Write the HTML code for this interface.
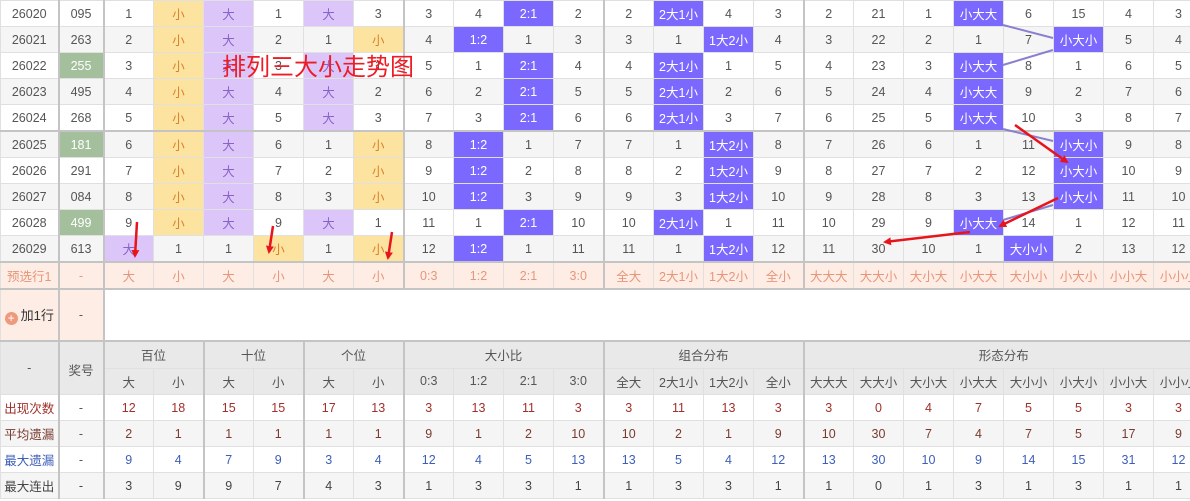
<!DOCTYPE html>
<html><head><meta charset="utf-8">
<style>
html,body{margin:0;padding:0;background:#fff;width:1190px;height:501px;overflow:hidden;}
body{position:relative;font-family:"Liberation Sans","Noto Sans CJK SC",sans-serif;font-size:12.5px;color:#555;}
table{border-collapse:collapse;table-layout:fixed;width:1203px;}
td{border:1px solid #e0e0e0;text-align:center;height:25px;padding:0;white-space:nowrap;overflow:hidden;}
tr.o td{background:#f5f5f5;}
.L{border-left:2px solid #c4c4c4;}
tr.t td{border-top:2px solid #c4c4c4;}
td.y{background:#fde3a0 !important;color:#d9822b;}
td.p{background:#dcc6f9 !important;color:#8a63c9;}
td.b{background:#7b68ff !important;color:#fff;}
td.g{background:#a3bf9c !important;color:#fff;}
tr.s td{background:#fdede5;color:#e8957a;border-top:2px solid #c4c4c4;}
tr.h td{background:#e9e9e9;color:#555;}
.r1 td{color:#a0302a;} .r2 td{color:#7a3b2e;} .r3 td{color:#3d5fb8;} .r4 td{color:#444;}
.r1 td.n{color:#a0302a;}
</style></head><body>
<table>
<colgroup><col style="width:58px"><col style="width:45px"><col span="22" style="width:50px"></colgroup>
<tr><td>26020</td><td class="L">095</td><td class="L">1</td><td class="y">小</td><td class="p">大</td><td>1</td><td class="p">大</td><td>3</td><td class="L">3</td><td>4</td><td class="b">2:1</td><td>2</td><td class="L">2</td><td class="b">2大1小</td><td>4</td><td>3</td><td class="L">2</td><td>21</td><td>1</td><td class="b">小大大</td><td>6</td><td>15</td><td>4</td><td>3</td></tr>
<tr class="o"><td>26021</td><td class="L">263</td><td class="L">2</td><td class="y">小</td><td class="p">大</td><td>2</td><td>1</td><td class="y">小</td><td class="L">4</td><td class="b">1:2</td><td>1</td><td>3</td><td class="L">3</td><td>1</td><td class="b">1大2小</td><td>4</td><td class="L">3</td><td>22</td><td>2</td><td>1</td><td>7</td><td class="b">小大小</td><td>5</td><td>4</td></tr>
<tr><td>26022</td><td class="L g">255</td><td class="L">3</td><td class="y">小</td><td class="p">大</td><td>3</td><td class="p">大</td><td>1</td><td class="L">5</td><td>1</td><td class="b">2:1</td><td>4</td><td class="L">4</td><td class="b">2大1小</td><td>1</td><td>5</td><td class="L">4</td><td>23</td><td>3</td><td class="b">小大大</td><td>8</td><td>1</td><td>6</td><td>5</td></tr>
<tr class="o"><td>26023</td><td class="L">495</td><td class="L">4</td><td class="y">小</td><td class="p">大</td><td>4</td><td class="p">大</td><td>2</td><td class="L">6</td><td>2</td><td class="b">2:1</td><td>5</td><td class="L">5</td><td class="b">2大1小</td><td>2</td><td>6</td><td class="L">5</td><td>24</td><td>4</td><td class="b">小大大</td><td>9</td><td>2</td><td>7</td><td>6</td></tr>
<tr><td>26024</td><td class="L">268</td><td class="L">5</td><td class="y">小</td><td class="p">大</td><td>5</td><td class="p">大</td><td>3</td><td class="L">7</td><td>3</td><td class="b">2:1</td><td>6</td><td class="L">6</td><td class="b">2大1小</td><td>3</td><td>7</td><td class="L">6</td><td>25</td><td>5</td><td class="b">小大大</td><td>10</td><td>3</td><td>8</td><td>7</td></tr>
<tr class="o t"><td>26025</td><td class="L g">181</td><td class="L">6</td><td class="y">小</td><td class="p">大</td><td>6</td><td>1</td><td class="y">小</td><td class="L">8</td><td class="b">1:2</td><td>1</td><td>7</td><td class="L">7</td><td>1</td><td class="b">1大2小</td><td>8</td><td class="L">7</td><td>26</td><td>6</td><td>1</td><td>11</td><td class="b">小大小</td><td>9</td><td>8</td></tr>
<tr><td>26026</td><td class="L">291</td><td class="L">7</td><td class="y">小</td><td class="p">大</td><td>7</td><td>2</td><td class="y">小</td><td class="L">9</td><td class="b">1:2</td><td>2</td><td>8</td><td class="L">8</td><td>2</td><td class="b">1大2小</td><td>9</td><td class="L">8</td><td>27</td><td>7</td><td>2</td><td>12</td><td class="b">小大小</td><td>10</td><td>9</td></tr>
<tr class="o"><td>26027</td><td class="L">084</td><td class="L">8</td><td class="y">小</td><td class="p">大</td><td>8</td><td>3</td><td class="y">小</td><td class="L">10</td><td class="b">1:2</td><td>3</td><td>9</td><td class="L">9</td><td>3</td><td class="b">1大2小</td><td>10</td><td class="L">9</td><td>28</td><td>8</td><td>3</td><td>13</td><td class="b">小大小</td><td>11</td><td>10</td></tr>
<tr><td>26028</td><td class="L g">499</td><td class="L">9</td><td class="y">小</td><td class="p">大</td><td>9</td><td class="p">大</td><td>1</td><td class="L">11</td><td>1</td><td class="b">2:1</td><td>10</td><td class="L">10</td><td class="b">2大1小</td><td>1</td><td>11</td><td class="L">10</td><td>29</td><td>9</td><td class="b">小大大</td><td>14</td><td>1</td><td>12</td><td>11</td></tr>
<tr class="o"><td>26029</td><td class="L">613</td><td class="L p">大</td><td>1</td><td>1</td><td class="y">小</td><td>1</td><td class="y">小</td><td class="L">12</td><td class="b">1:2</td><td>1</td><td>11</td><td class="L">11</td><td>1</td><td class="b">1大2小</td><td>12</td><td class="L">11</td><td>30</td><td>10</td><td>1</td><td class="b">大小小</td><td>2</td><td>13</td><td>12</td></tr>
<tr class="s"><td>预选行1</td><td class="L">-</td><td class="L">大</td><td>小</td><td>大</td><td>小</td><td>大</td><td>小</td><td class="L">0:3</td><td>1:2</td><td>2:1</td><td>3:0</td><td class="L">全大</td><td>2大1小</td><td>1大2小</td><td>全小</td><td class="L">大大大</td><td>大大小</td><td>大小大</td><td>小大大</td><td>大小小</td><td>小大小</td><td>小小大</td><td>小小小</td></tr>
<tr style="height:51px"><td style="background:#fdede5;color:#333;border-top:2px solid #c4c4c4;height:50px;font-size:13px"><span style="display:inline-block;width:13px;height:13px;border-radius:50%;background:#ee9a7c;color:#fff;font-size:12px;line-height:13px;vertical-align:-2px;margin-right:3px">+</span>加1行</td><td class="L" style="background:#fdede5;border-top:2px solid #c4c4c4">-</td><td class="L" colspan="22" style="background:#fff;border-top:2px solid #c4c4c4"></td></tr>
<tr class="h t"><td rowspan="2">-</td><td rowspan="2" class="L" style="vertical-align:top;padding-top:18px;height:34px">奖号</td><td class="L" colspan="2">百位</td><td colspan="2" class="L">十位</td><td colspan="2" class="L">个位</td><td colspan="4" class="L">大小比</td><td colspan="4" class="L">组合分布</td><td colspan="8" class="L">形态分布</td></tr>
<tr class="h"><td class="L">大</td><td>小</td><td class="L">大</td><td>小</td><td class="L">大</td><td>小</td><td class="L">0:3</td><td>1:2</td><td>2:1</td><td>3:0</td><td class="L">全大</td><td>2大1小</td><td>1大2小</td><td>全小</td><td class="L">大大大</td><td>大大小</td><td>大小大</td><td>小大大</td><td>大小小</td><td>小大小</td><td>小小大</td><td>小小小</td></tr>
<tr class="r1"><td>出现次数</td><td class="L" style="color:#555">-</td><td class="L">12</td><td>18</td><td class="L">15</td><td>15</td><td class="L">17</td><td>13</td><td class="L">3</td><td>13</td><td>11</td><td>3</td><td class="L">3</td><td>11</td><td>13</td><td>3</td><td class="L">3</td><td>0</td><td>4</td><td>7</td><td>5</td><td>5</td><td>3</td><td>3</td></tr>
<tr class="r2 o"><td>平均遗漏</td><td class="L" style="color:#555">-</td><td class="L">2</td><td>1</td><td class="L">1</td><td>1</td><td class="L">1</td><td>1</td><td class="L">9</td><td>1</td><td>2</td><td>10</td><td class="L">10</td><td>2</td><td>1</td><td>9</td><td class="L">10</td><td>30</td><td>7</td><td>4</td><td>7</td><td>5</td><td>17</td><td>9</td></tr>
<tr class="r3"><td>最大遗漏</td><td class="L" style="color:#555">-</td><td class="L">9</td><td>4</td><td class="L">7</td><td>9</td><td class="L">3</td><td>4</td><td class="L">12</td><td>4</td><td>5</td><td>13</td><td class="L">13</td><td>5</td><td>4</td><td>12</td><td class="L">13</td><td>30</td><td>10</td><td>9</td><td>14</td><td>15</td><td>31</td><td>12</td></tr>
<tr class="r4 o"><td>最大连出</td><td class="L">-</td><td class="L">3</td><td>9</td><td class="L">9</td><td>7</td><td class="L">4</td><td>3</td><td class="L">1</td><td>3</td><td>3</td><td>1</td><td class="L">1</td><td>3</td><td>3</td><td>1</td><td class="L">1</td><td>0</td><td>1</td><td>3</td><td>1</td><td>3</td><td>1</td><td>1</td></tr>
</table>
<div style="position:absolute;left:222px;top:50px;font-size:24px;color:#ee1c25;font-family:'Noto Sans CJK SC',sans-serif;line-height:30px">排列三大小走势图</div>
<svg width="1190" height="501" style="position:absolute;left:0;top:0;pointer-events:none">
<defs><marker id="a" markerWidth="8" markerHeight="8" refX="6" refY="4" orient="auto" markerUnits="userSpaceOnUse"><path d="M0,0 L8,4 L0,8 z" fill="#e8141c"/></marker></defs>
<g stroke="#8a80d0" stroke-width="2" fill="none">
<line x1="1003" y1="25" x2="1053" y2="38"/><line x1="1053" y1="50" x2="1003" y2="65"/>
<line x1="1003" y1="129" x2="1053" y2="141"/><line x1="1053" y1="205" x2="1003" y2="220"/>
</g>
<g stroke="#e8141c" stroke-width="2.5" fill="none" marker-end="url(#a)">
<line x1="137" y1="222" x2="135" y2="256"/>
<line x1="273" y1="226" x2="269" y2="252"/>
<line x1="392" y1="232" x2="388" y2="258"/>
<line x1="1015" y1="125" x2="1067" y2="162"/>
<line x1="1058" y1="198" x2="1000" y2="226"/>
<line x1="970" y1="232" x2="885" y2="242"/>
</g>
</svg>
</body></html>
